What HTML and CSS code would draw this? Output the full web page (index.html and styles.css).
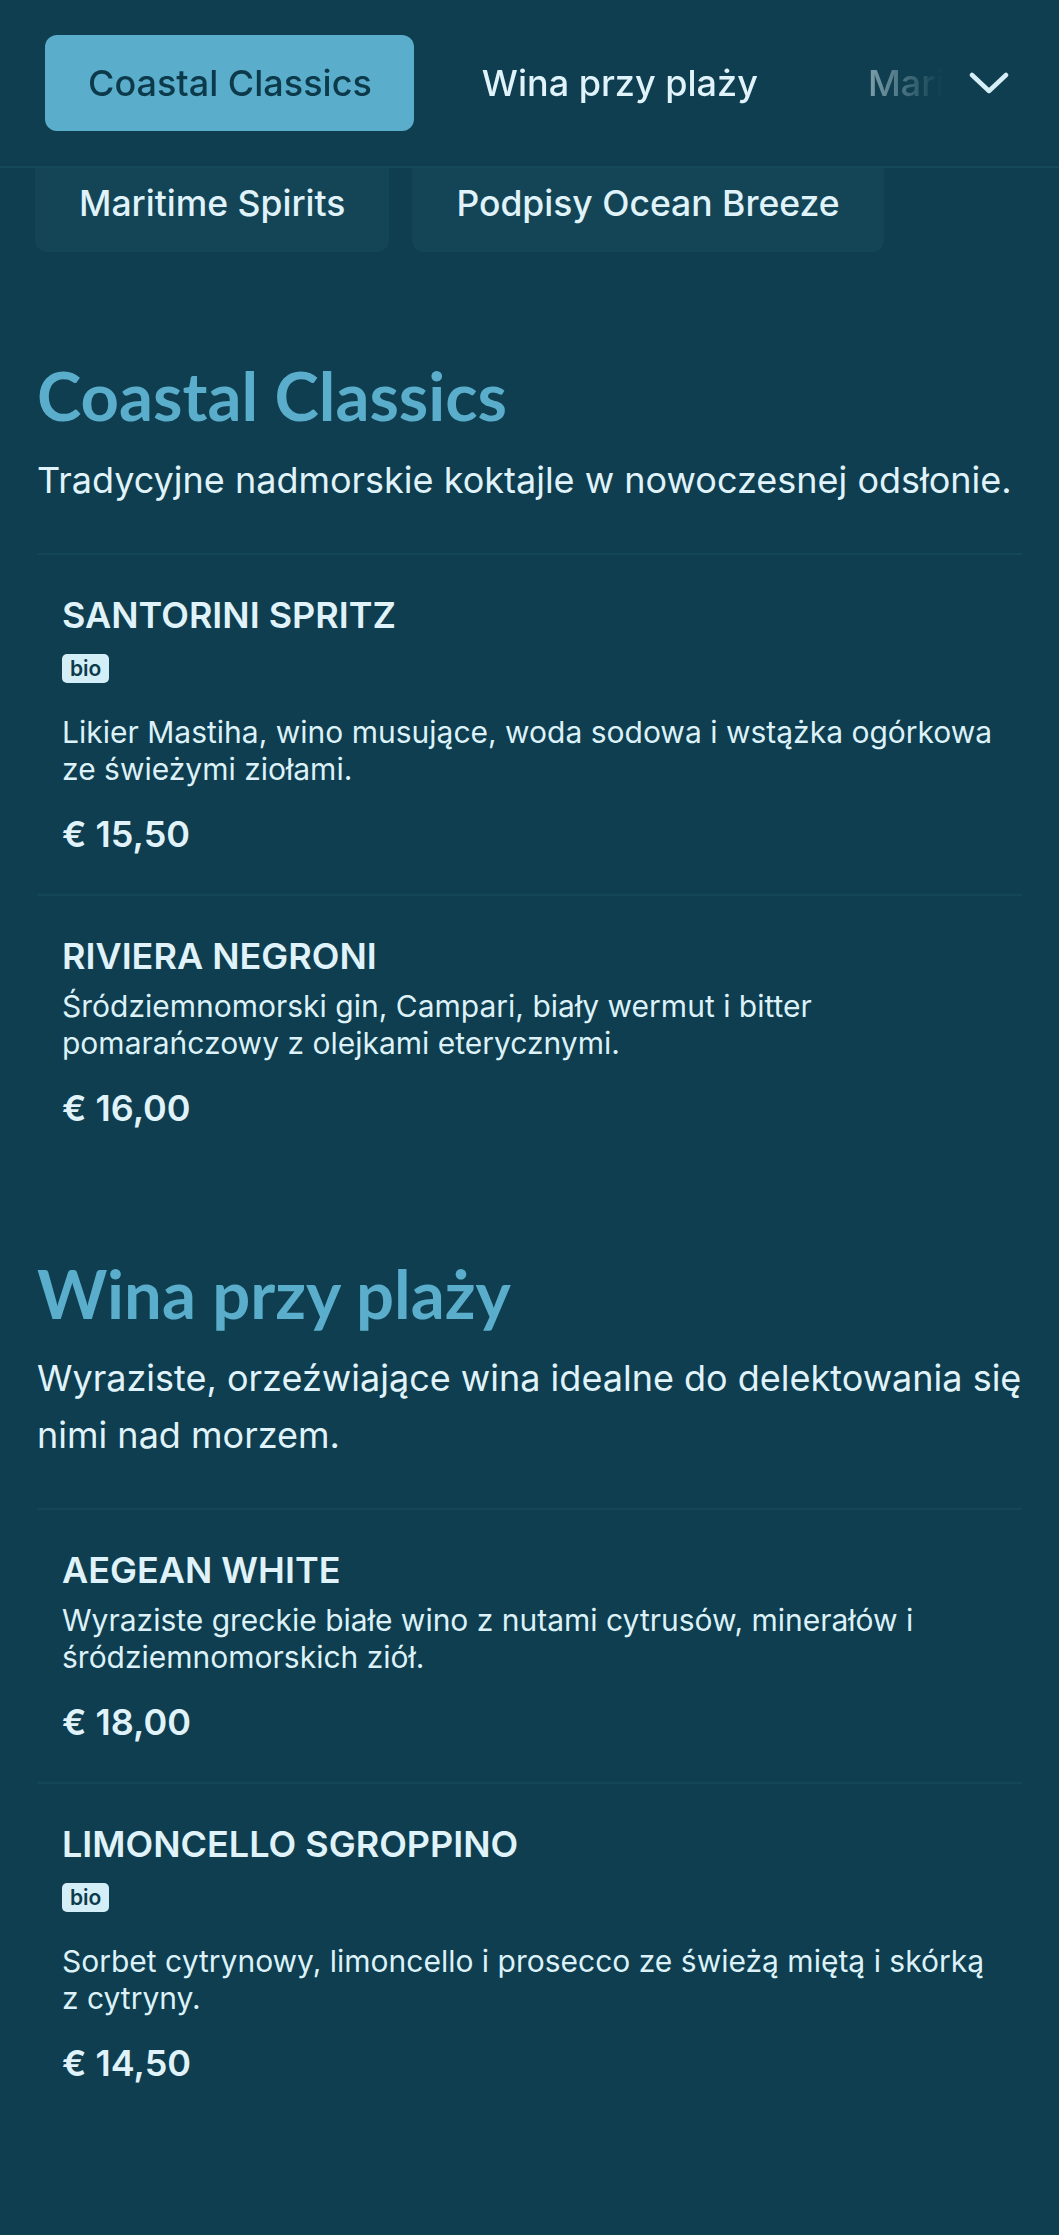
FILE: index.html
```html
<!DOCTYPE html>
<html lang="pl">
<head>
<meta charset="utf-8">
<title>Menu</title>
<link rel="stylesheet" href="styles.css">
</head>
<body>
<header class="topbar">
  <nav class="tabs">
    <a class="tab tab-active">Coastal Classics</a>
    <a class="tab">Wina przy plaży</a>
    <a class="tab">Maritime Spirits</a>
    <a class="tab">Podpisy Ocean Breeze</a>
  </nav>
  <button class="toggle" aria-label="Rozwiń kategorie">
    <svg viewBox="0 0 40 22" width="40" height="22"><path d="M3 3 L20 19 L37 3" fill="none" stroke="currentColor" stroke-width="4.5" stroke-linecap="round" stroke-linejoin="round"/></svg>
  </button>
</header>
<div class="chips-clip">
  <div class="chips">
    <span class="chip">Maritime Spirits</span>
    <span class="chip">Podpisy Ocean Breeze</span>
  </div>
</div>
<main class="menu">
  <section class="category">
    <h2 class="cat-title">Coastal Classics</h2>
    <p class="cat-sub">Tradycyjne nadmorskie koktajle w nowoczesnej odsłonie.</p>
    <ul class="items">
      <li class="item">
        <h3 class="item-name">SANTORINI SPRITZ</h3>
        <div class="tags"><span class="tag">bio</span></div>
        <p class="item-desc">Likier Mastiha, wino musujące, woda sodowa i wstążka ogórkowa ze świeżymi ziołami.</p>
        <p class="item-price">€ 15,50</p>
      </li>
      <li class="item">
        <h3 class="item-name">RIVIERA NEGRONI</h3>
        <p class="item-desc">Śródziemnomorski gin, Campari, biały wermut i bitter pomarańczowy z olejkami eterycznymi.</p>
        <p class="item-price">€ 16,00</p>
      </li>
    </ul>
  </section>
  <section class="category">
    <h2 class="cat-title">Wina przy plaży</h2>
    <p class="cat-sub">Wyraziste, orzeźwiające wina idealne do delektowania się nimi nad morzem.</p>
    <ul class="items">
      <li class="item">
        <h3 class="item-name">AEGEAN WHITE</h3>
        <p class="item-desc">Wyraziste greckie białe wino z nutami cytrusów, minerałów i śródziemnomorskich ziół.</p>
        <p class="item-price">€ 18,00</p>
      </li>
      <li class="item">
        <h3 class="item-name">LIMONCELLO SGROPPINO</h3>
        <div class="tags"><span class="tag">bio</span></div>
        <p class="item-desc">Sorbet cytrynowy, limoncello i prosecco ze świeżą miętą i skórką z cytryny.</p>
        <p class="item-price">€ 14,50</p>
      </li>
    </ul>
  </section>
</main>
</body>
</html>
```
FILE: styles.css
```css
* { box-sizing: border-box; }
html, body {
  margin: 0;
  padding: 0;
  background: #0e3e4f;
  color: #e0f3fa;
  font-family: Inter, "Noto Sans", sans-serif;
}
.topbar {
  height: 168px;
  display: flex;
  align-items: center;
  border-bottom: 2px solid #154a5b;
  background: #0e3e4f;
  position: relative;
  z-index: 2;
}
.tabs {
  flex: 1;
  display: flex;
  gap: 25px;
  padding-left: 45px;
  overflow: hidden;
  white-space: nowrap;
  -webkit-mask-image: linear-gradient(to right, #000 calc(100% - 150px), transparent calc(100% - 10px));
  mask-image: linear-gradient(to right, #000 calc(100% - 150px), transparent calc(100% - 10px));
}
.tab {
  flex: none;
  height: 96px;
  padding: 0 42px 0 43px;
  display: flex;
  align-items: center;
  border-radius: 12px;
  font-size: 36px;
  font-weight: 500;
  color: #e0f3fa;
}
.tab-active {
  background: #5aaecb;
  color: #0d3a4b;
}
.toggle {
  flex: none;
  width: 72px;
  height: 96px;
  margin-right: 34px;
  border: 0;
  padding: 0;
  background: transparent;
  color: #d6eef6;
  display: flex;
  align-items: center;
  justify-content: center;
}
.chips-clip {
  overflow: hidden;
  height: 84px;
}
.chips {
  display: flex;
  gap: 23px;
  padding-left: 35px;
  margin-top: -14px;
}
.chip {
  height: 98px;
  display: flex;
  align-items: center;
  padding: 0 44px;
  border-radius: 12px;
  background: #134556;
  font-size: 35.5px;
  font-weight: 500;
  color: #e0f3fa;
}
.menu {
  padding: 14px 37px 140px;
}
.category {
  padding-top: 86px;
}
.category:first-child {
  padding-top: 90px;
}
.cat-title {
  margin: 0;
  font-family: Lato, "Noto Sans", sans-serif;
  font-weight: 700;
  font-size: 67px;
  line-height: 79px;
  color: #5aaecb;
}
.cat-sub {
  margin: 17px 0 44px;
  font-size: 36px;
  line-height: 57px;
  color: #e0f3fa;
}
.items {
  list-style: none;
  margin: 0;
  padding: 0;
}
.item {
  border-top: 2px solid #134657;
  padding: 38px 24px 38px 25px;
}
.item-name {
  margin: 0 0 10px;
  font-size: 36px;
  line-height: 44px;
  font-weight: 600;
  color: #e0f3fa;
}
.tags {
  display: flex;
  gap: 8px;
  margin: 17px 0 31px;
}
.tag {
  height: 29px;
  padding: 0 8px;
  border-radius: 5px;
  background: #d4eef8;
  color: #0d3a4b;
  font-size: 21px;
  line-height: 29px;
  font-weight: 600;
}
.item-desc {
  margin: 0;
  font-size: 30px;
  line-height: 37px;
  color: #dcf1f8;
}
.item-price {
  margin: 24px 0 0;
  font-size: 36px;
  line-height: 44px;
  font-weight: 600;
  color: #e0f3fa;
}
```
